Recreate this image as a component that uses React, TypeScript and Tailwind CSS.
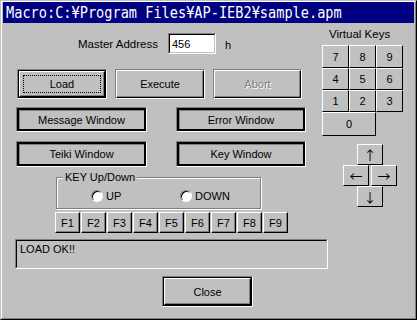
import React from "react";

const face = "bg-[#c0c0c0]";

interface BtnProps {
    children?: React.ReactNode
    className?: string
    isDefault?: boolean
    focused?: boolean
    disabled?: boolean
}

// win95-ish push button sitting in a thin sunken well
const Btn = (props: BtnProps) => {
    const {children, className, isDefault, focused, disabled} = props
    return (
        <div className={`border border-t-[#808080] border-l-[#808080] border-b-white border-r-white ${className ?? ""}`}>
            <div className={`h-full ${isDefault ? "border border-black" : ""}`}>
                <div className="h-full border border-t-white border-l-white border-b-black border-r-black shadow-[inset_-1px_-1px_0_#808080] p-[3px]">
                    <div className={`h-full flex items-center justify-center border ${focused ? "border-dotted border-black" : "border-transparent"} ${disabled ? "text-[#808080] [text-shadow:1px_1px_0_#fff]" : ""}`}>
                        {children}
                    </div>
                </div>
            </div>
        </div>
    )
}

// the "pressed" looking window toggles
const WinBtn = ({children, className}: {children: React.ReactNode, className?: string}) => (
    <div className={`border border-t-[#808080] border-l-[#808080] border-b-white border-r-white ${className ?? ""}`}>
        <div className="h-full border-2 border-black shadow-[inset_1px_1px_0_#808080] flex items-center justify-center">
            {children}
        </div>
    </div>
)

const Key = ({children, className}: {children: React.ReactNode, className?: string}) => (
    <div className={`flex items-center justify-center border border-t-white border-l-white border-b-black border-r-black ${className ?? ""}`}>
        {children}
    </div>
)

const Radio = ({label, className}: {label: string, className?: string}) => (
    <div className={`flex items-center ${className ?? ""}`}>
        <div className="w-[12px] h-[12px] rounded-full bg-white border border-t-[#808080] border-l-[#808080] border-b-white border-r-white shadow-[inset_1px_1px_0_#000]"></div>
        <span className="ml-[3px]">{label}</span>
    </div>
)

const fKeys = ["F1", "F2", "F3", "F4", "F5", "F6", "F7", "F8", "F9"]

export default function App() {
    return (
        <div className="w-[417px] h-[320px] font-['Liberation_Sans',Arial,sans-serif] text-[11px] leading-[14px] text-black border border-t-[#c0c0c0] border-l-[#c0c0c0] border-b-black border-r-black bg-[#c0c0c0]">
            <div className="h-full border border-t-white border-l-white border-b-[#808080] border-r-[#808080] px-[1px] flex flex-col">
                <div className="h-[21px] bg-[#000080] pl-[3px] flex items-center overflow-hidden">
                    <span className="block text-white font-['DejaVu_Sans_Mono',monospace] text-[16px] leading-none whitespace-nowrap scale-x-[0.85] origin-left">
                        Macro:C:¥Program Files¥AP-IEB2¥sample.apm
                    </span>
                </div>

                <div className={`flex ${face}`}>
                    <div className="w-[315px] flex flex-col">
                        <div className="flex items-center mt-[10px] pl-[75px]">
                            <span className="w-[90px] text-[11.5px]">Master Address</span>
                            <div className="w-[48px] h-[21px] bg-white border border-t-[#808080] border-l-[#808080] border-b-white border-r-white">
                                <div className="h-full border border-t-black border-l-black border-b-[#c0c0c0] border-r-[#c0c0c0] pl-[2px] flex items-center">456</div>
                            </div>
                            <span className="ml-[9px] mt-[3px]">h</span>
                        </div>

                        <div className="flex mt-[15px] pl-[14px] gap-[8px]">
                            <Btn className="w-[90px] h-[30px]" isDefault focused>Load</Btn>
                            <Btn className="w-[90px] h-[30px]">Execute</Btn>
                            <Btn className="w-[89px] h-[30px]" disabled>Abort</Btn>
                        </div>

                        <div className="flex mt-[8px] pl-[13px]">
                            <WinBtn className="w-[131px] h-[25px]">Message Window</WinBtn>
                            <WinBtn className="w-[130px] h-[25px] ml-[29px]">Error Window</WinBtn>
                        </div>
                        <div className="flex mt-[9px] pl-[13px]">
                            <WinBtn className="w-[131px] h-[26px]">Teiki Window</WinBtn>
                            <WinBtn className="w-[130px] h-[26px] ml-[29px]">Key Window</WinBtn>
                        </div>

                        <div className="relative mt-[10px] ml-[53px] w-[205px] h-[32px] border border-[#808080] shadow-[inset_1px_1px_0_#fff,1px_1px_0_#fff]">
                            <span className="absolute -top-[8px] left-[6px] px-[2px] bg-[#c0c0c0]">KEY Up/Down</span>
                            <div className="flex items-center h-full pt-[6px] pl-[34px]">
                                <Radio label="UP" className="w-[89px]"/>
                                <Radio label="DOWN"/>
                            </div>
                        </div>

                        <div className="flex mt-[3px] pl-[52px] gap-[1px]">
                            {fKeys.map(k =>
                                <Key key={k} className="w-[25px] h-[21px] shadow-[inset_-1px_-1px_0_#808080]">{k}</Key>
                            )}
                        </div>
                    </div>

                    <div className="flex-1 flex flex-col">
                        <span className="mt-[4px] ml-[11px] text-[11.5px]">Virtual Keys</span>
                        <div className="mt-[4px] ml-[4px] grid grid-cols-[27px_27px_27px] grid-rows-[23px_22px_22px_24px] w-[81px]">
                            {["7", "8", "9", "4", "5", "6", "1", "2", "3"].map(n =>
                                <Key key={n}>{n}</Key>
                            )}
                            <Key className="col-span-2">0</Key>
                        </div>
                        <div className="mt-[8px] ml-[25px] w-[54px] flex flex-col items-center text-[13px] leading-none font-['Noto_Sans_CJK_JP',sans-serif]">
                            <Key className="w-[26px] h-[21px]">↑</Key>
                            <div className="flex gap-[2px]">
                                <Key className="w-[26px] h-[21px]">←</Key>
                                <Key className="w-[26px] h-[21px]">→</Key>
                            </div>
                            <Key className="w-[26px] h-[21px]">↓</Key>
                        </div>
                    </div>
                </div>

                <div className="mt-[6px] ml-[12px] w-[313px] h-[30px] border border-t-[#808080] border-l-[#808080] border-b-white border-r-white">
                    <div className="h-full border border-t-black border-l-black border-b-[#c0c0c0] border-r-[#c0c0c0] pl-[3px] pt-[1px]">LOAD OK!!</div>
                </div>

                <div className="mt-[7px] ml-[159px]">
                    <Btn className="w-[91px] h-[31px]" isDefault>Close</Btn>
                </div>
            </div>
        </div>
    )
}
